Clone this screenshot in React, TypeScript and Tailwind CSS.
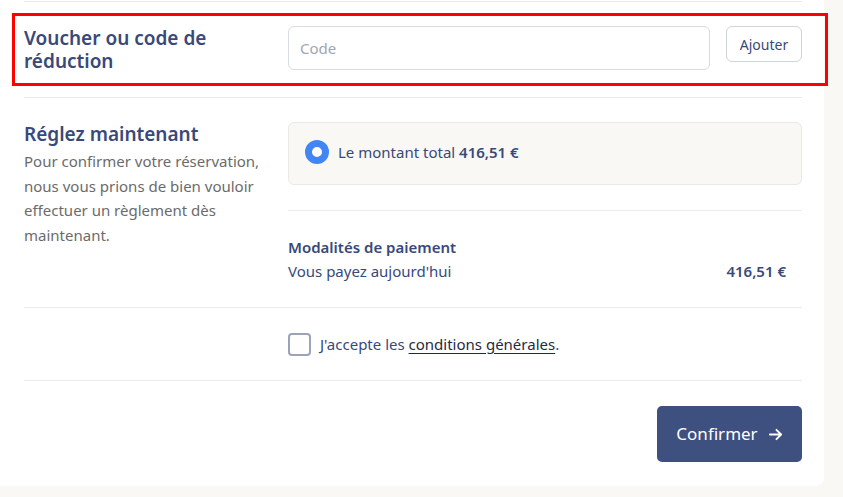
import React from "react";

export default function App() {
  const navy = "text-[#38497a]";
  return (
    <div className="min-h-[497px] w-[843px] bg-[#f9f8f5] overflow-hidden" style={{ fontFamily: '"Noto Sans", "Open Sans", sans-serif' }}>
      <div className="w-[824px] bg-white rounded-br-[8px] pl-[24px] pr-[22px] pb-[24px] pt-[1px]">
        <div className="h-px bg-[#ebebeb]" />
        {/* Voucher */}
        <div className="mt-[11px] -ml-[12px] -mr-[26px] border-[3px] border-[#ff0000] pl-[9px] pr-[23px] pt-[10px] pb-[10px] flex items-start">
          <div className={`w-[264px] pt-[1px] text-[19px] leading-[23px] font-semibold ${navy}`}>
            Voucher ou code de réduction
          </div>
          <div className="flex-1 flex gap-[16px] items-start">
            <input
              placeholder="Code"
              className="flex-1 h-[44px] rounded-[6px] border border-[#d9dce2] px-[11px] text-[15px] text-[#38497a] placeholder:text-[#a0a6b4] outline-none"
            />
            <button className={`w-[76px] h-[36px] rounded-[6px] border border-[#cfd3db] text-[14px] ${navy} bg-white`}>
              Ajouter
            </button>
          </div>
        </div>
        <div className="mt-[11px] h-px bg-[#ebebeb]" />
        {/* Réglez maintenant */}
        <div className="flex pt-[24px]">
          <div className="w-[264px]">
            <div className={`text-[19px] leading-[24px] font-semibold ${navy}`}>Réglez maintenant</div>
            <p className="mt-[3px] text-[15px] leading-[24.5px] text-[#6b6b6b] pr-[10px]">
              Pour confirmer votre réservation, nous vous prions de bien vouloir effectuer un règlement dès maintenant.
            </p>
          </div>
          <div className="flex-1">
            <div className="h-[63px] rounded-[6px] border border-[#ebe9e4] bg-[#f9f8f5] flex items-center pl-[16px] pb-[3px]">
              <span className="w-[24px] h-[24px] rounded-full border-[7px] border-[#4285f4] bg-white" />
              <span className={`ml-[9px] text-[15px] ${navy}`}>
                Le montant total <span className="font-semibold">416,51 €</span>
              </span>
            </div>
            <div className="mt-[25px] h-px bg-[#ebebeb]" />
            <div className={`pt-[24px] text-[15px] leading-[24px] ${navy}`}>
              <div className="font-semibold">Modalités de paiement</div>
              <div className="flex justify-between pr-[16px]">
                <span>Vous payez aujourd'hui</span>
                <span className="font-semibold">416,51 €</span>
              </div>
            </div>
          </div>
        </div>
        <div className="mt-[24px] h-px bg-[#ebebeb]" />
        <div className="h-[72px] flex items-center pl-[264px]">
          <span className="w-[23px] h-[23px] rounded-[4px] border-2 border-[#9aa3b8] bg-white" />
          <span className={`ml-[9px] text-[15px] ${navy}`}>
            J'accepte les <span className="underline underline-offset-[3px] text-[#1f2a44]">conditions générales</span>.
          </span>
        </div>
        <div className="h-px bg-[#ebebeb]" />
        <div className="flex justify-end pt-[25px]">
          <button className="w-[145px] h-[56px] rounded-[5px] bg-[#3d5080] text-white text-[17px] flex items-center justify-center gap-[10px]">
            Confirmer
            <svg width="15" height="15" viewBox="0 0 16 16" fill="none" stroke="white" strokeWidth="2" strokeLinecap="round" strokeLinejoin="round">
              <path d="M2 8h12M9 3l5 5-5 5" />
            </svg>
          </button>
        </div>
      </div>
    </div>
  );
}
